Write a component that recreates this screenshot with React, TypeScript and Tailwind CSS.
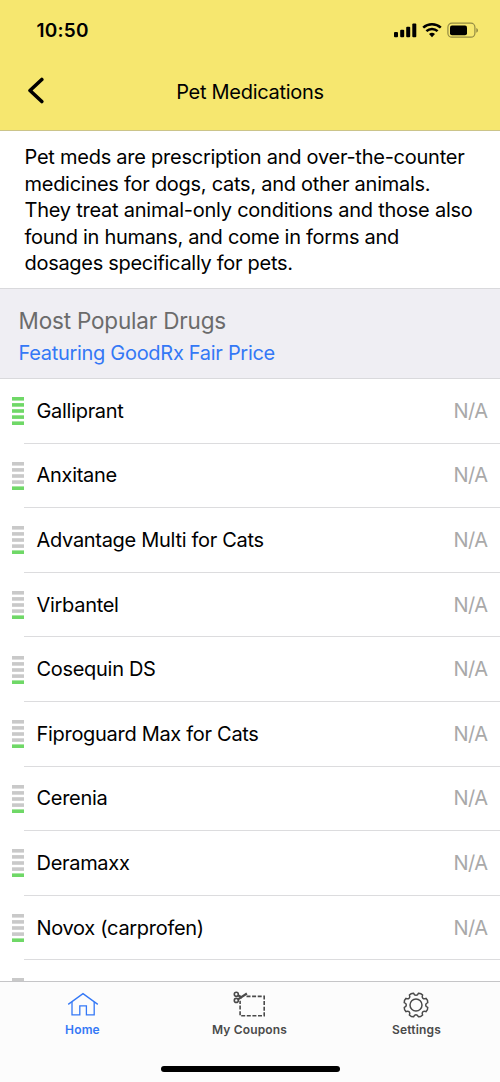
import React from "react";

const intro = [
  { text: "Pet meds are prescription and over-the-counter", tracking: "tracking-[-0.25px]" },
  { text: "medicines for dogs, cats, and other animals.", tracking: "tracking-[-0.27px]" },
  { text: "They treat animal-only conditions and those also", tracking: "tracking-[-0.24px]" },
  { text: "found in humans, and come in forms and", tracking: "tracking-[-0.3px]" },
  { text: "dosages specifically for pets.", tracking: "tracking-[-0.3px]" },
];

const drugs = [
  { name: "Galliprant", score: 5 },
  { name: "Anxitane", score: 1 },
  { name: "Advantage Multi for Cats", score: 1 },
  { name: "Virbantel", score: 1 },
  { name: "Cosequin DS", score: 1 },
  { name: "Fiproguard Max for Cats", score: 1 },
  { name: "Cerenia", score: 1 },
  { name: "Deramaxx", score: 1 },
  { name: "Novox (carprofen)", score: 1 },
];

function Popularity({ score }: { score: number }) {
  return (
    <svg className="flex-none" width="12" height="28" viewBox="0 0 12 28">
      {[5, 4, 3, 2, 1].map((level, i) => (
        <rect key={level} y={i * 6.1} width="12" height="3.6" fill={level <= score ? "#6fd867" : "#c9c9c9"} />
      ))}
    </svg>
  );
}

function StatusBar() {
  return (
    <div className="flex h-[60px] items-center justify-between pr-[20px] pl-[36.5px]">
      <span className="text-[19px] leading-none font-semibold tracking-[0.2px]">10:50</span>
      <svg width="87" height="18" viewBox="0 0 87 18" fill="none">
        <rect x="1" y="11" width="4" height="5.2" rx="1" fill="#000" />
        <rect x="7.2" y="8.7" width="4" height="7.5" rx="1" fill="#000" />
        <rect x="13.2" y="5.8" width="4" height="10.4" rx="1" fill="#000" />
        <rect x="19.3" y="2.4" width="4" height="13.8" rx="1" fill="#000" />
        <path d="M30.2 6.7a13 13 0 0 1 17.6 0M33.4 10.2a8.2 8.2 0 0 1 11.2 0" stroke="#000" strokeWidth="2.5" />
        <path d="M39 16.2l-3-3.1a4.6 4.6 0 0 1 6 0z" fill="#000" />
        <rect x="54.9" y="2.2" width="27" height="14" rx="4" stroke="#000" strokeOpacity=".4" strokeWidth="1.2" />
        <rect x="57" y="4.5" width="17" height="9.8" rx="2" fill="#000" />
        <path d="M83.4 7v4.8c2-.9 2-3.9 0-4.8z" fill="#000" fillOpacity=".45" />
      </svg>
    </div>
  );
}

function HomeIcon() {
  return (
    <svg width="32" height="26" viewBox="0 0 32 26" fill="none" stroke="currentColor" strokeWidth="1.3">
      <path d="M1.2 12.4 16 1.6l14.8 10.8" />
      <path d="M5 10v12.8h7.8v-9h6.6v9h7.8V10" />
    </svg>
  );
}

function CouponIcon() {
  return (
    <svg className="-ml-px" width="34" height="28" viewBox="0 0 34 28" fill="none" stroke="currentColor" strokeWidth="1.6">
      <path d="M14.5 5.4h17.7v19.3H8.1V9.8" strokeDasharray="4 1.6" />
      <circle cx="4.3" cy="3.2" r="2" />
      <circle cx="4.3" cy="9.4" r="2" />
      <path d="M6 4.3l4.2 2.4M6 8.4l8.9-5.9" strokeWidth="2.2" />
    </svg>
  );
}

function gearPath() {
  const c = 13;
  const point = (r: number, deg: number) => {
    const a = (deg * Math.PI) / 180;
    return `${(c + r * Math.cos(a)).toFixed(2)} ${(c + r * Math.sin(a)).toFixed(2)}`;
  };
  let d = "";
  for (let i = 0; i < 8; i++) {
    const a = i * 45 + 22.5;
    d += `${i ? "L" : "M"}${point(12, a - 11)}`;
    d += `Q${point(12.9, a)} ${point(12, a + 11)}`;
    d += `C${point(9.2, a + 13)} ${point(9, a + 32)} ${point(12, a + 34)}`;
  }
  return d + "Z";
}

function SettingsIcon() {
  return (
    <svg className="-ml-px" width="26" height="26" viewBox="0 0 26 26" fill="none" stroke="currentColor" strokeWidth="1.5" strokeLinejoin="round">
      <path d={gearPath()} />
      <circle cx="13" cy="13" r="6" />
    </svg>
  );
}

function Tab({ label, color, children }: { label: string; color: string; children: React.ReactNode }) {
  return (
    <div className={`flex flex-1 flex-col items-center ${color}`}>
      <div className="flex h-[40px] items-center justify-center pt-[5px]">{children}</div>
      <span className="text-[12px] leading-[16px] font-semibold tracking-[0.15px]">{label}</span>
    </div>
  );
}

export default function App() {
  return (
    <div className="flex h-[1082px] w-[500px] flex-col overflow-hidden bg-white font-['Inter','Liberation_Sans',sans-serif] text-black">
      <header className="h-[131px] flex-none border-b border-[#cbc48a] bg-[#f6e76f]">
        <StatusBar />
        <div className="grid h-[62px] grid-cols-[100px_1fr_100px] items-center">
          <svg className="ml-[27px]" width="18" height="28" viewBox="0 0 18 28" fill="none" stroke="#000" strokeWidth="3.6" strokeLinecap="round" strokeLinejoin="round">
            <path d="M14.8 2.5 3 13.5l11.8 11" />
          </svg>
          <h1 className="pt-[2px] text-center text-[20px] leading-none tracking-[-0.28px] whitespace-nowrap">Pet Medications</h1>
        </div>
      </header>

      <section className="h-[157px] flex-none pt-[13px] pl-[24.5px] text-[20px] leading-[26.6px]">
        {intro.map((line) => (
          <p key={line.text} className={`whitespace-nowrap ${line.tracking}`}>{line.text}</p>
        ))}
      </section>

      <section className="h-[91px] flex-none border-y border-[#d9d9dc] bg-[#efeef3] pt-[16px] pl-[18.5px] whitespace-nowrap">
        <h2 className="text-[22.5px] leading-[32px] tracking-[-0.18px] text-[#6b6b6b]">Most Popular Drugs</h2>
        <p className="text-[20px] leading-[32px] tracking-[-0.3px] text-[#3478f6]">Featuring GoodRx Fair Price</p>
      </section>

      <main className="min-h-0 flex-1 overflow-hidden">
        {drugs.map((drug) => (
          <div key={drug.name} className="flex h-[64.6px] pl-3">
            <div className="-mr-3 flex items-center">
              <Popularity score={drug.score} />
            </div>
            <div className="ml-3 flex flex-1 items-center justify-between border-b border-[#dcdcde] pr-[12.5px] pl-[12.5px] text-[20px] tracking-[-0.3px]">
              <span>{drug.name}</span>
              <span className="tracking-[-0.5px] text-[#a9a9a9]">N/A</span>
            </div>
          </div>
        ))}
        <div className="pt-[18px] pl-3">
          <Popularity score={1} />
        </div>
      </main>

      <nav className="flex h-[101px] flex-none flex-col justify-between border-t border-[#c5c5c7] bg-[#fcfcfc]">
        <div className="-ml-px flex">
          <Tab label="Home" color="text-[#3478f6]"><HomeIcon /></Tab>
          <Tab label="My Coupons" color="text-[#4a4a4a]"><CouponIcon /></Tab>
          <Tab label="Settings" color="text-[#4a4a4a]"><SettingsIcon /></Tab>
        </div>
        <div className="mb-[10px] h-[6px] w-[179px] self-center rounded-full bg-black" />
      </nav>
    </div>
  );
}
